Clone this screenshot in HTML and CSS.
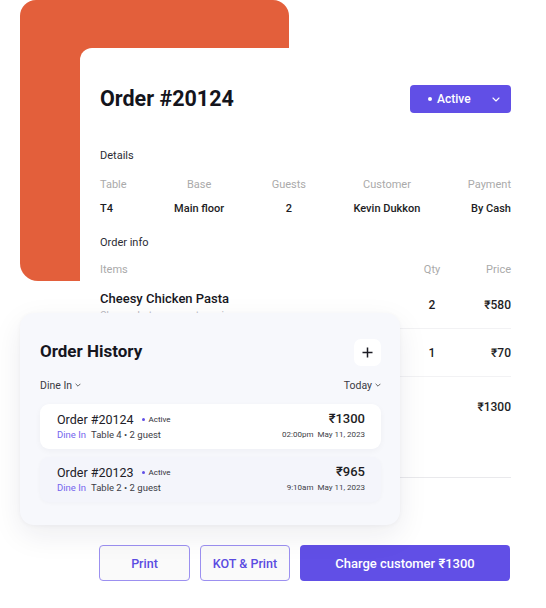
FILE: index.html
```html
<!DOCTYPE html>
<html lang="en">
<head>
<meta charset="utf-8">
<title>Order #20124</title>
<link rel="stylesheet" href="styles.css">
</head>
<body>
<div class="stage">
  <div class="accent"></div>

  <main class="order-card">
    <header class="order-head">
      <h1 class="order-title">Order #20124</h1>
      <button class="status-btn" type="button">
        <span class="status-label"><span class="status-dot"></span>Active</span>
        <svg class="chev" width="8" height="5" viewBox="0 0 8 5"><path d="M1 1l3 3 3-3" fill="none" stroke="#fff" stroke-width="1.1" stroke-linecap="round" stroke-linejoin="round"/></svg>
      </button>
    </header>

    <section class="details">
      <h2 class="section-title">Details</h2>
      <div class="detail-grid">
        <div class="dcol dcol-start"><span class="label">Table</span><span class="value">T4</span></div>
        <div class="dcol"><span class="label">Base</span><span class="value">Main floor</span></div>
        <div class="dcol"><span class="label">Guests</span><span class="value">2</span></div>
        <div class="dcol"><span class="label">Customer</span><span class="value">Kevin Dukkon</span></div>
        <div class="dcol dcol-end"><span class="label">Payment</span><span class="value">By Cash</span></div>
      </div>
    </section>

    <section class="order-info">
      <h2 class="section-title">Order info</h2>
      <div class="items-head">
        <span class="label item-col">Items</span>
        <span class="label qty-col">Qty</span>
        <span class="label price-col">Price</span>
      </div>
      <div class="item-row">
        <div class="item-col">
          <div class="item-name">Cheesy Chicken Pasta</div>
          <div class="item-sub">Cheese, hot sauce, extra onion</div>
        </div>
        <span class="qty-col qty">2</span>
        <span class="price-col price">₹580</span>
      </div>
      <div class="item-row">
        <div class="item-col"></div>
        <span class="qty-col qty">1</span>
        <span class="price-col price">₹70</span>
      </div>
      <div class="item-row total-row">
        <div class="item-col"></div>
        <span class="qty-col qty"></span>
        <span class="price-col price">₹1300</span>
      </div>
    </section>

    <div class="actions">
      <button class="btn btn-outline btn-print" type="button">Print</button>
      <button class="btn btn-outline btn-kot" type="button">KOT &amp; Print</button>
      <button class="btn btn-primary" type="button">Charge customer ₹1300</button>
    </div>
  </main>

  <aside class="history">
    <div class="history-head">
      <h2 class="history-title">Order History</h2>
      <button class="add-btn" type="button" aria-label="Add">
        <svg width="11" height="11" viewBox="0 0 11 11"><path d="M5.5 0.5v10M0.5 5.5h10" stroke="#1c1c24" stroke-width="1.5"/></svg>
      </button>
    </div>
    <div class="history-filters">
      <span class="filter">Dine In
        <svg width="6" height="4" viewBox="0 0 6 4"><path d="M0.6 0.8l2.4 2.4 2.4-2.4" fill="none" stroke="#555" stroke-width="0.9"/></svg>
      </span>
      <span class="filter">Today
        <svg width="6" height="4" viewBox="0 0 6 4"><path d="M0.6 0.8l2.4 2.4 2.4-2.4" fill="none" stroke="#555" stroke-width="0.9"/></svg>
      </span>
    </div>
    <div class="history-list">
      <div class="hrow hrow-active">
        <div class="hrow-main">
          <div class="hrow-top"><span class="hrow-order">Order #20124</span><span class="tag"><span class="tag-dot"></span>Active</span></div>
          <div class="hrow-meta"><span class="mode">Dine In</span><span class="where">Table 4 • 2 guest</span></div>
        </div>
        <div class="hrow-side">
          <span class="hrow-amount">₹1300</span>
          <span class="hrow-date">02:00pm&nbsp; May 11, 2023</span>
        </div>
      </div>
      <div class="hrow">
        <div class="hrow-main">
          <div class="hrow-top"><span class="hrow-order">Order #20123</span><span class="tag"><span class="tag-dot"></span>Active</span></div>
          <div class="hrow-meta"><span class="mode">Dine In</span><span class="where">Table 2 • 2 guest</span></div>
        </div>
        <div class="hrow-side">
          <span class="hrow-amount">₹965</span>
          <span class="hrow-date">9:10am&nbsp; May 11, 2023</span>
        </div>
      </div>
    </div>
  </aside>
</div>
</body>
</html>
```

FILE: styles.css
```css
* { box-sizing: border-box; }

html, body {
  margin: 0;
  padding: 0;
  background: #ffffff;
}

body {
  font-family: Roboto, "Noto Sans", "DejaVu Sans", sans-serif;
  color: #1c1c22;
  overflow: hidden;
}

.stage {
  position: relative;
  width: 546px;
  height: 608px;
  padding-top: 48px;
}

.accent {
  position: absolute;
  left: 20px;
  top: 0;
  width: 269px;
  height: 281px;
  background: #e35f3b;
  border-radius: 16px 16px 16px 18px;
}

.order-card {
  position: relative;
  margin-left: 80px;
  width: 451px;
  height: 580px;
  padding: 37px 20px 0 20px;
  background: #ffffff;
  border-radius: 12px 0 0 0;
}

.order-head {
  display: flex;
  justify-content: space-between;
  align-items: center;
  height: 28px;
}

.order-title {
  margin: 0;
  font-size: 21.5px;
  font-weight: 700;
  color: #14141c;
  line-height: 26px;
}

.status-btn {
  display: flex;
  align-items: center;
  justify-content: space-between;
  width: 101px;
  height: 28px;
  padding: 0 11px 0 18px;
  border: none;
  border-radius: 4px;
  background: #614fe6;
  color: #ffffff;
  font-family: inherit;
  font-size: 12px;
  font-weight: 500;
}

.status-label {
  display: flex;
  align-items: center;
  gap: 5px;
}

.status-dot {
  width: 4px;
  height: 4px;
  border-radius: 50%;
  background: #ffffff;
}

.section-title {
  margin: 0;
  font-size: 11px;
  font-weight: 400;
  line-height: 14px;
  color: #2c2c33;
}

.details {
  margin-top: 36px;
}

.detail-grid {
  display: flex;
  justify-content: space-between;
  margin-top: 15px;
}

.dcol {
  display: flex;
  flex-direction: column;
  align-items: center;
  gap: 10px;
}

.dcol-start { align-items: flex-start; }
.dcol-end { align-items: flex-end; }

.label {
  font-size: 11px;
  line-height: 14px;
  color: #aaaaaa;
}

.value {
  font-size: 11px;
  line-height: 14px;
  font-weight: 500;
  color: #1d1d24;
}

.order-info {
  margin-top: 20px;
}

.items-head {
  display: flex;
  align-items: center;
  margin-top: 13px;
  margin-bottom: 4px;
}

.item-col { flex: 1; min-width: 0; }
.qty-col { width: 30px; text-align: center; }
.price-col { width: 64px; text-align: right; }

.item-row {
  display: flex;
  align-items: center;
  height: 48px;
  border-bottom: 1px solid #f2f2f4;
}

.item-row .item-col {
  padding-top: 3px;
}

.item-name {
  font-size: 13px;
  line-height: 16px;
  font-weight: 500;
  color: #17171e;
}

.item-sub {
  margin-top: 2px;
  font-size: 10px;
  line-height: 13px;
  color: #b9b9bf;
}

.qty, .price {
  font-size: 12px;
  font-weight: 500;
  color: #1d1d24;
}

.total-row {
  height: 101px;
  align-items: flex-start;
  padding-top: 22px;
  border-bottom-color: #e9e9ec;
}

.total-row .qty, .total-row .price {
  line-height: 16px;
}

.actions {
  display: flex;
  gap: 10px;
  margin-top: 67px;
  margin-left: -1px;
}

.btn {
  height: 36px;
  border-radius: 4px;
  font-family: inherit;
  font-size: 12.5px;
  font-weight: 500;
}

.btn-outline {
  background: #fafafa;
  border: 1px solid #9c90f0;
  color: #5b4ce1;
}

.btn-print { width: 91px; }
.btn-kot { width: 90px; }

.btn-primary {
  flex: 1;
  border: none;
  background: #614fe6;
  color: #ffffff;
  font-size: 13px;
  margin-right: 1px;
}

/* history overlay */
.history {
  position: absolute;
  left: 20px;
  top: 313px;
  width: 380px;
  height: 212px;
  padding: 26px 19px 0 20px;
  background: #f7f8fc;
  border-radius: 14px;
  box-shadow: 0 10px 30px rgba(30, 30, 60, 0.08), 0 1px 4px rgba(30, 30, 60, 0.04);
}

.history-head {
  display: flex;
  justify-content: space-between;
  align-items: center;
  height: 27px;
}

.history-title {
  margin: 0 0 4px;
  font-size: 17px;
  font-weight: 700;
  line-height: 20px;
  color: #16161e;
}

.add-btn {
  display: flex;
  align-items: center;
  justify-content: center;
  width: 27px;
  height: 27px;
  padding: 0;
  border: none;
  border-radius: 7px;
  background: #ffffff;
}

.history-filters {
  display: flex;
  justify-content: space-between;
  align-items: center;
  margin-top: 12px;
  height: 14px;
}

.filter {
  display: flex;
  align-items: center;
  gap: 3px;
  font-size: 10.5px;
  color: #3b3b44;
}

.history-list {
  display: flex;
  flex-direction: column;
  gap: 8px;
  margin-top: 12px;
}

.hrow {
  display: flex;
  justify-content: space-between;
  height: 45px;
  padding: 7px 16px 0 17px;
  border-radius: 9px;
  background: #f4f5fb;
  box-shadow: 0 1px 4px rgba(30, 30, 60, 0.03);
}

.hrow-active {
  background: #ffffff;
  box-shadow: 0 2px 6px rgba(30, 30, 60, 0.04);
}

.hrow-main, .hrow-side {
  display: flex;
  flex-direction: column;
  gap: 2px;
}

.hrow-side { align-items: flex-end; }

.hrow-top {
  display: flex;
  align-items: center;
  gap: 8px;
  height: 16px;
}

.hrow-order {
  font-size: 12.5px;
  font-weight: 400;
  color: #202028;
}

.tag {
  display: flex;
  align-items: center;
  gap: 4px;
  font-size: 8px;
  color: #2e2e36;
}

.tag-dot {
  width: 3px;
  height: 3px;
  border-radius: 50%;
  background: #614fe6;
}

.hrow-meta {
  display: flex;
  gap: 5px;
  height: 12px;
  font-size: 9.5px;
  line-height: 12px;
}

.mode { color: #7466ee; }
.where { color: #3d3d46; }

.hrow-amount {
  font-size: 13px;
  line-height: 16px;
  font-weight: 500;
  color: #1d1d24;
}

.hrow-date {
  font-size: 8px;
  line-height: 12px;
  color: #3d3d46;
}
```
